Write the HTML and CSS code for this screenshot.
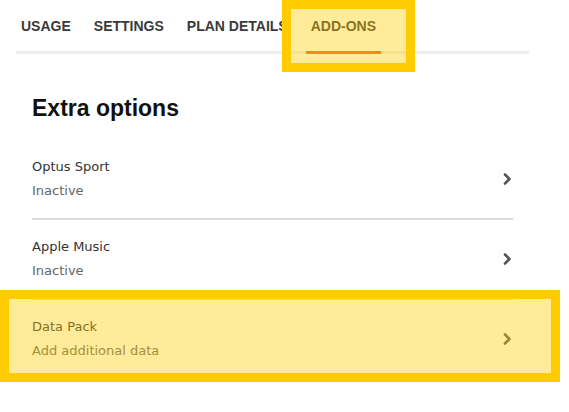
FILE: index.html
```html
<!DOCTYPE html>
<html lang="en">
<head>
    <meta charset="UTF-8">
    <meta name="viewport" content="width=device-width, initial-scale=1.0">
    <title>Add-ons</title>
    <link rel="stylesheet" href="styles.css">
</head>
<body>
    <div class="account">
        <nav class="tabs">
            <a class="tab">USAGE</a>
            <a class="tab">SETTINGS</a>
            <a class="tab">PLAN DETAILS</a>
            <a class="tab active">ADD-ONS</a>
        </nav>

        <section class="extras">
            <h2 class="extras-title">Extra options</h2>
            <ul class="addon-list">
                <li class="addon">
                    <div class="addon-text">
                        <div class="addon-name">Optus Sport</div>
                        <div class="addon-status">Inactive</div>
                    </div>
                    <svg class="chevron" width="9" height="12" viewBox="0 0 9 12"><polyline points="2,1.5 6.5,6 2,10.5" /></svg>
                </li>
                <li class="addon">
                    <div class="addon-text">
                        <div class="addon-name">Apple Music</div>
                        <div class="addon-status">Inactive</div>
                    </div>
                    <svg class="chevron" width="9" height="12" viewBox="0 0 9 12"><polyline points="2,1.5 6.5,6 2,10.5" /></svg>
                </li>
                <li class="addon">
                    <div class="addon-text">
                        <div class="addon-name">Data Pack</div>
                        <div class="addon-status">Add additional data</div>
                    </div>
                    <svg class="chevron" width="9" height="12" viewBox="0 0 9 12"><polyline points="2,1.5 6.5,6 2,10.5" /></svg>
                </li>
            </ul>
        </section>
    </div>

    <!-- highlight boxes laid over the screenshot -->
    <div class="callout callout-tab"></div>
    <div class="callout callout-row"></div>
</body>
</html>
```

FILE: styles.css
```css
:root {
    --ink: #333;
    --muted: #666;
    --line: #eee;
    --divider: #dcdcdc;
    --orange: #f5573a;
    --yellow: #ffcc00;
}

* {
    margin: 0;
    padding: 0;
    box-sizing: border-box;
}

body {
    font-family: 'DejaVu Sans', 'Noto Sans', sans-serif;
    background: #fff;
    color: var(--ink);
    position: relative;
    min-height: 412px;
}

.account {
    width: 513px;
    margin-left: 16px;
}

/* Tabs */
.tabs {
    display: flex;
    gap: 13px;
    border-bottom: 3px solid var(--line);
}

.tab {
    font-family: 'Liberation Sans', Arial, sans-serif;
    font-weight: 700;
    font-size: 14px;
    line-height: 16px;
    color: #3a3a3a;
    padding: 18px 5px 17px;
    border-bottom: 3px solid transparent;
    margin-bottom: -3px;
    white-space: nowrap;
}

.tab.active {
    border-bottom-color: var(--orange);
}

/* Extra options */
.extras {
    padding: 0 16px;
}

.extras-title {
    font-family: 'Liberation Sans', Arial, sans-serif;
    font-size: 23px;
    line-height: 28px;
    font-weight: 700;
    color: #111;
    margin: 40px 0 18px;
}

.addon-list {
    list-style: none;
}

.addon {
    display: flex;
    align-items: center;
    justify-content: space-between;
    padding: 18px 0;
    border-bottom: 2px solid var(--divider);
}

.addon-text {
    display: flex;
    flex-direction: column;
    gap: 6px;
    font-size: 13px;
    line-height: 18px;
}

.addon-name {
    color: var(--ink);
}

.addon-status {
    color: var(--muted);
}

.chevron {
    fill: none;
    stroke: #555;
    stroke-width: 2.6;
    stroke-linecap: round;
    stroke-linejoin: round;
    margin-right: 1px;
}

/* Yellow highlight boxes */
.callout {
    position: absolute;
    border: 9px solid var(--yellow);
    background: rgba(255, 204, 0, 0.4);
}

.callout-tab {
    left: 282px;
    top: 0;
    width: 133px;
    height: 72px;
}

.callout-row {
    left: 0;
    top: 290px;
    width: 560px;
    height: 92px;
}
```
